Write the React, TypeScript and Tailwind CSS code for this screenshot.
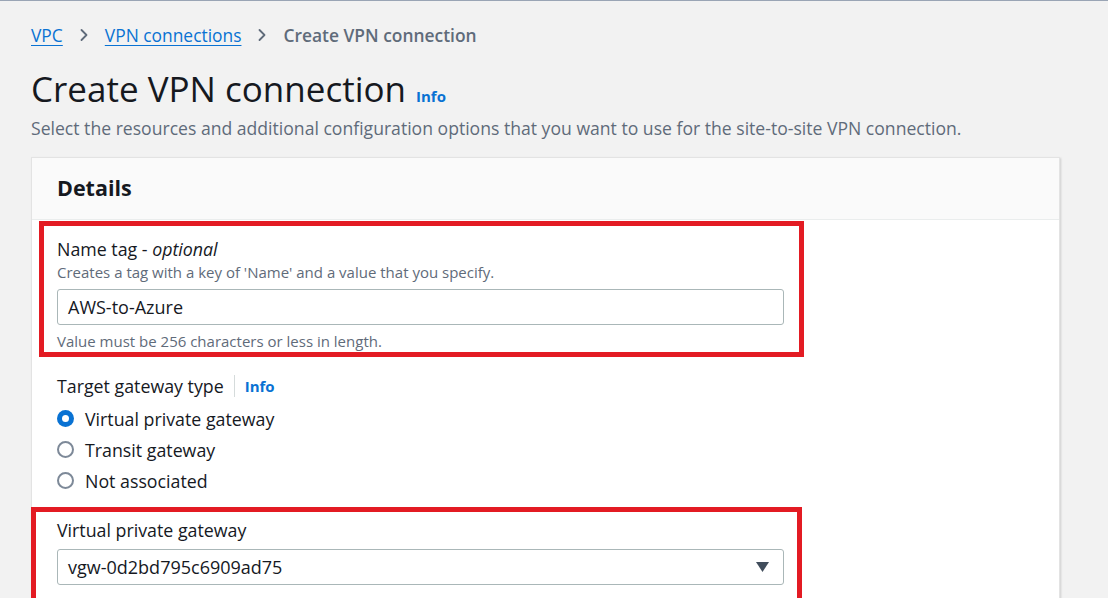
import { ChevronRight } from "lucide-react";

const font = { fontFamily: '"Open Sans", "Noto Sans", Arial, sans-serif' };

function Radio({ checked, label }: { checked?: boolean; label: string }) {
  return (
    <div className="flex items-center gap-[11px] h-[31px]">
      {checked ? (
        <span className="h-[17px] w-[17px] rounded-full bg-[#0972d3] flex items-center justify-center">
          <span className="h-[7px] w-[7px] rounded-full bg-white" />
        </span>
      ) : (
        <span className="h-[17px] w-[17px] rounded-full border-2 border-[#7d8998] bg-white" />
      )}
      <span className="text-[17.8px] leading-[26px] text-[#16191f]">{label}</span>
    </div>
  );
}

export default function App() {
  return (
    <div className="w-[1108px] h-[598px] overflow-hidden bg-[#f2f2f2] border-t border-[#9aa5b5]" style={font}>
      <div className="pl-[31px]">
        {/* breadcrumb */}
        <nav className="flex items-center h-[34px] mt-[17px] text-[17.4px]">
          <a className="text-[#0972d3] underline underline-offset-[3px]">VPC</a>
          <ChevronRight className="mx-[11px] text-[#5f6b7a]" size={20} strokeWidth={2.2} />
          <a className="text-[#0972d3] underline underline-offset-[3px]">VPN connections</a>
          <ChevronRight className="mx-[11px] text-[#5f6b7a]" size={20} strokeWidth={2.2} />
          <span className="text-[#5f6b7a] font-semibold">Create VPN connection</span>
        </nav>

        {/* title */}
        <div className="flex items-baseline gap-[10px] mt-[15px]">
          <h1 className="text-[35px] leading-[44px] text-[#16191f]">Create VPN connection</h1>
          <span className="text-[15px] font-bold text-[#0972d3]">Info</span>
        </div>
        <p className="text-[17.6px] leading-[24px] text-[#5f6b7a] mt-[5px]">
          Select the resources and additional configuration options that you want to use for the site-to-site VPN connection.
        </p>

        {/* card */}
        <div className="mt-[17px] w-[1029px] bg-white border border-[#e3e3e3] shadow-[1px_1px_2px_rgba(0,0,0,0.15)]">
          <div className="h-[62px] bg-[#fafafa] border-b border-[#eaeded] flex items-center px-[25px]">
            <h2 className="text-[21.5px] font-bold text-[#16191f]">Details</h2>
          </div>

          <div className="pt-[1px]">
            {/* name tag */}
            <div className="ml-[7px] w-[765px] h-[136px] border-[5px] border-[#e31b23] pl-[13px] pr-[15px] pt-[10px]">
              <div className="text-[17.8px] text-[#16191f] leading-[26px]">
                Name tag - <i>optional</i>
              </div>
              <div className="text-[15px] text-[#5f6b7a] leading-[20px]">
                Creates a tag with a key of 'Name' and a value that you specify.
              </div>
              <div className="mt-[7px] h-[36px] border border-[#aab7b8] rounded-[3px] flex items-center px-[10px] text-[18px] text-[#16191f]">
                AWS-to-Azure
              </div>
              <div className="mt-[6px] text-[15px] text-[#5f6b7a] leading-[20px]">
                Value must be 256 characters or less in length.
              </div>
            </div>

            {/* target gateway type */}
            <div className="pl-[25px] pt-[17px]">
              <div className="flex items-center h-[24px] text-[17.8px] text-[#16191f]">
                <span>Target gateway type</span>
                <span className="mx-[10px] h-[22px] w-px bg-[#d5dbdb]" />
                <span className="text-[15px] font-bold text-[#0972d3]">Info</span>
              </div>
              <div className="mt-[5px]">
                <Radio checked label="Virtual private gateway" />
                <Radio label="Transit gateway" />
                <Radio label="Not associated" />
              </div>
            </div>

            {/* virtual private gateway */}
            <div className="-ml-px mt-[11px] w-[771px] h-[100px] border-[5px] border-[#e31b23] pl-[21px] pr-[13px] pt-[5px]">
              <div className="text-[17.8px] text-[#16191f] leading-[26px]">Virtual private gateway</div>
              <div className="mt-[6px] h-[36px] border border-[#aab7b8] rounded-[3px] flex items-center justify-between px-[10px] text-[18px] text-[#16191f]">
                <span>vgw-0d2bd795c6909ad75</span>
                <svg width="13" height="10" viewBox="0 0 13 10" className="mr-[4px]">
                  <path d="M0 0h13L6.5 10z" fill="#414d5c" />
                </svg>
              </div>
            </div>
          </div>
        </div>
      </div>
    </div>
  );
}
